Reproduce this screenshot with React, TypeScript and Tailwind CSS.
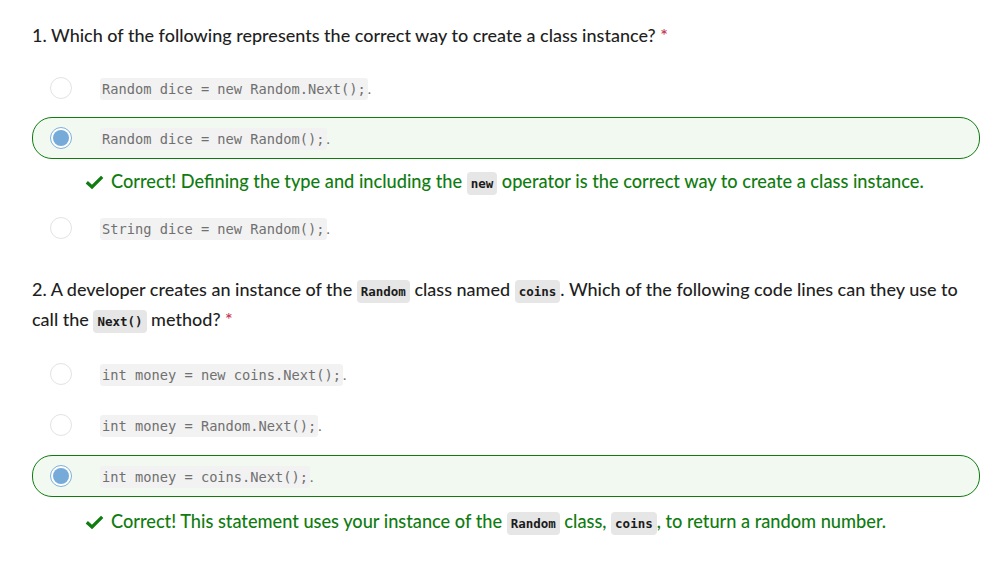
import React from "react";

const sans = { fontFamily: '"Segoe UI", Lato, "Noto Sans", sans-serif' };

function Code({ children }: { children: React.ReactNode }) {
  return (
    <code className="rounded-[3px] bg-[#f2f2f2] px-[2px] py-[3px] text-[13.7px] leading-none text-[#707070] [font-family:'DejaVu_Sans_Mono',monospace]">
      {children}
    </code>
  );
}

function InlineCode({ children }: { children: React.ReactNode }) {
  return (
    <code className="rounded-[4px] bg-[#e6e6e6] px-[4px] py-[4px] text-[12.5px] font-bold leading-none text-[#1b1b1b] [font-family:'DejaVu_Sans_Mono',monospace]">
      {children}
    </code>
  );
}

function Radio({ checked }: { checked?: boolean }) {
  if (checked)
    return (
      <span className="flex h-[22px] w-[22px] shrink-0 items-center justify-center rounded-full border-[1.5px] border-[#7fb0dc] bg-white">
        <span className="h-[16px] w-[16px] rounded-full bg-[#76aad8]" />
      </span>
    );
  return <span className="h-[22px] w-[22px] shrink-0 rounded-full border border-[#e3e3e3] bg-white" />;
}

function Option({ code, checked }: { code: string; checked?: boolean }) {
  return (
    <div
      className={
        "flex h-[42px] items-center rounded-[20px] border pl-[17px] " +
        (checked ? "border-[#107c10] bg-[#f1f9f1]" : "border-transparent")
      }
    >
      <Radio checked={checked} />
      <span className="ml-[28px] text-[#6e6e6e]">
        <Code>{code}</Code>
        <span className="text-[14px]">.</span>
      </span>
    </div>
  );
}

function Check() {
  return (
    <svg width="19" height="16" viewBox="0 0 19 16" className="shrink-0">
      <path d="M1.8 8.2 L7 13 L17.2 2.8" fill="none" stroke="#107c10" strokeWidth="3.2" />
    </svg>
  );
}

function Feedback({ children }: { children: React.ReactNode }) {
  return (
    <div className="ml-[53px] flex items-center gap-[7px] text-[18.2px] font-medium text-[#107c10]">
      <Check />
      <span>{children}</span>
    </div>
  );
}

export default function App() {
  return (
    <div className="min-h-[562px] w-[1000px] bg-white pl-[32px] pr-[20px] pt-[20px] text-[#1f1f1f]" style={sans}>
      <p className="text-[18px] font-medium leading-[30px]">
        1. Which of the following represents the correct way to create a class instance?{" "}
        <span className="text-[#c4314b]">*</span>
      </p>
      <div className="mt-[17px] flex flex-col gap-[8px]">
        <Option code="Random dice = new Random.Next();" />
        <Option code="Random dice = new Random();" checked />
      </div>
      <div className="mt-[9px]">
        <Feedback>
          Correct! Defining the type and including the <InlineCode>new</InlineCode> operator is the correct way to
          create a class instance.
        </Feedback>
      </div>
      <div className="mt-[12px]">
        <Option code="String dice = new Random();" />
      </div>
      <p className="mt-[25px] text-[18px] font-medium leading-[30px]">
        2. A developer creates an instance of the <InlineCode>Random</InlineCode> class named{" "}
        <InlineCode>coins</InlineCode>. Which of the following code lines can they use to call the{" "}
        <InlineCode>Next()</InlineCode> method? <span className="text-[#c4314b]">*</span>
      </p>
      <div className="mt-[19px] flex flex-col gap-[9px]">
        <Option code="int money = new coins.Next();" />
        <Option code="int money = Random.Next();" />
        <Option code="int money = coins.Next();" checked />
      </div>
      <div className="mt-[11px]">
        <Feedback>
          Correct! This statement uses your instance of the <InlineCode>Random</InlineCode> class,{" "}
          <InlineCode>coins</InlineCode>, to return a random number.
        </Feedback>
      </div>
    </div>
  );
}
